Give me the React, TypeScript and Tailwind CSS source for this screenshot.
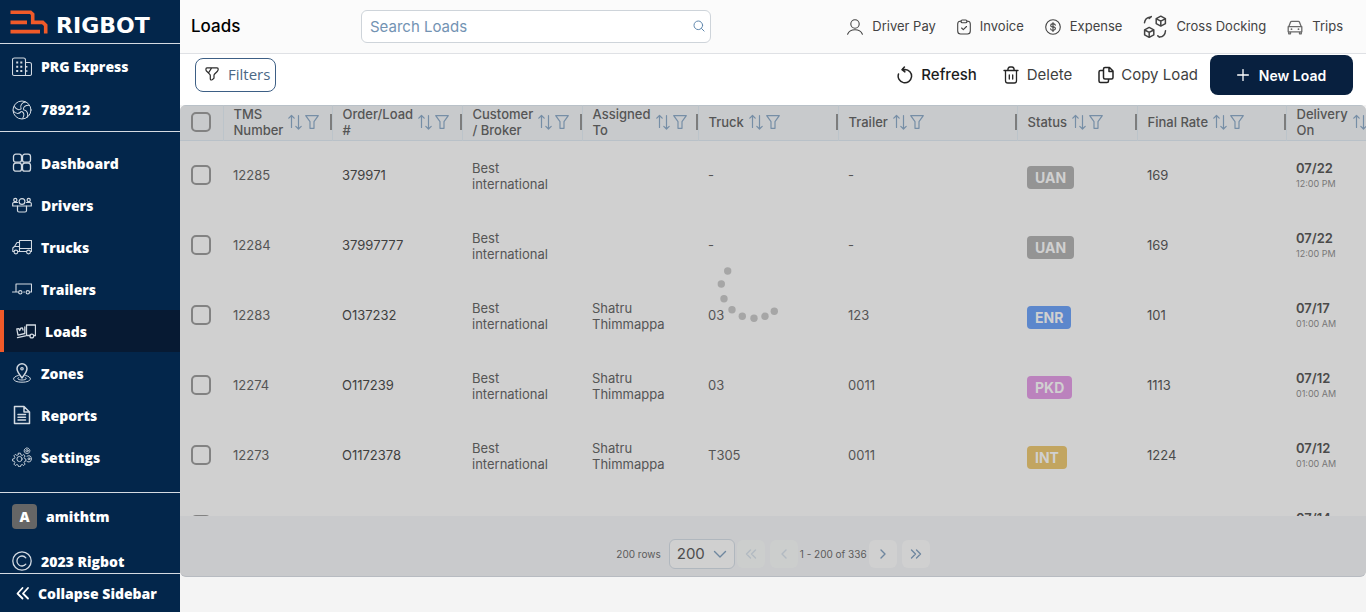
import React from "react";

type IconProps = { className?: string };

const line = {
  fill: "none",
  stroke: "currentColor",
  strokeLinecap: "round" as const,
  strokeLinejoin: "round" as const,
};

/* ---------- sidebar icons (20 x 20) ---------- */

function SideSvg({ children, width = 1.1 }: { children: React.ReactNode; width?: number }) {
  return (
    <svg viewBox="0 0 20 20" className="h-5 w-5 shrink-0 text-[#d3dae2]" {...line} strokeWidth={width} aria-hidden="true">
      {children}
    </svg>
  );
}

const CompanyIcon = () => (
  <SideSvg>
    <path d="M2.500 1h9q2 0 2 2v15.500h-11.500q-1.500 0-1.500-1.500V2.500Q.5 1 2.500 1zM13.500 5.500h4q2 0 2 2v9.500q0 1.500-1.500 1.500h-4.500" />
    <g strokeWidth="2" strokeLinecap="square">
      <path d="M5.200 5.500v0M9.300 5.500v0M5.200 9.700v0M9.300 9.700v0M5.200 13.900v0M9.300 13.900v0" />
      <path d="M14.700 9.800v0M14.700 14v0" strokeWidth="1.500" />
    </g>
  </SideSvg>
);
const DotIcon = () => (
  <SideSvg width={1}>
    <circle cx="10" cy="10" r="9" />
    {["rotate(15 10 10)", "rotate(135 10 10)", "rotate(255 10 10)"].map((turn) => (
      <g key={turn} transform={turn}>
        <path d="M8.800 9C6.500 6 8 2.600 11.500 1.300M11.200 9C10.500 6.300 12 4.500 15.300 3.600" />
      </g>
    ))}
  </SideSvg>
);
const DashboardIcon = () => (
  <SideSvg width={1.300}>
    <rect x="1.500" y="1.200" width="8" height="8" rx="2.300" />
    <rect x="10.500" y="1.200" width="8" height="8" rx="2.300" />
    <rect x="1.500" y="10.200" width="8" height="8" rx="2.300" />
    <rect x="10.500" y="10.200" width="8" height="8" rx="2.300" />
  </SideSvg>
);
const DriversIcon = () => (
  <SideSvg width={1.200}>
    <circle cx="10" cy="6.500" r="2.900" />
    <path d="M5.500 11h9v4.500q0 1.500-1.500 1.500H7q-1.500 0-1.500-1.500z" />
    <circle cx="3.300" cy="5" r="1.600" />
    <circle cx="16.700" cy="5" r="1.600" />
    <path d="M5.500 11H.7V8.500q0-1 1-1h3.800M14.500 11h4.800V8.500q0-1-1-1h-3.800" />
  </SideSvg>
);
const TrucksIcon = () => (
  <SideSvg>
    <path d="M7.500 14.500V3.500h12v11h-1M14.500 14.500h-9M7.500 5.500H5L2.500 9.500.8 11v3.500h1.200M2.500 9.500h5M7.500 11.500h12" />
    <circle cx="3.900" cy="15" r="1.900" />
    <circle cx="16.500" cy="15" r="1.900" />
  </SideSvg>
);
const TrailersIcon = () => (
  <SideSvg>
    <path d="M6 13H.5M4 13V5h15.500v8h-1.200M12.500 13h-.8" />
    <circle cx="8.300" cy="13.300" r="1.700" />
    <circle cx="15.800" cy="13.300" r="1.700" />
  </SideSvg>
);
const LoadsIcon = () => (
  <SideSvg width={1.300}>
    <path d="M10.500 14.500V4h9v10.500h-1M14 14.500h-3.500" />
    <circle cx="15.800" cy="15" r="1.900" />
    <path d="M8.800 12.500L2 14.200.8 8l2-.4.9 2 1.100-2.500 1.600-.3.600 2.200M8.800 12.500V6M1.500 16.700l8-1.900" />
  </SideSvg>
);
const ZonesIcon = () => (
  <SideSvg width={1.200}>
    <path d="M10 15C6.500 10.500 5 8 5 5.800a5 5 0 0 1 10 0C15 8 13.500 10.500 10 15z" strokeWidth="1.500" />
    <circle cx="10" cy="5.800" r="1.200" />
    <path d="M6.300 12.500c-7.500 1.700-6 6.700 3.700 6.700s11.200-5 3.700-6.700" strokeWidth="1" />
    <path d="M6.800 14.500c-2.300 1.200-.6 2.500 3.200 2.500s5.500-1.300 3.200-2.500" strokeWidth="1" />
  </SideSvg>
);
const ReportsIcon = () => (
  <SideSvg width={1.500}>
    <path d="M2.500 1.500h9.500l5.500 5.500v11.500h-15zM12 1.500V7h5.500" />
    <path d="M6 9.500h7.500M6 12.200h7.500M6 14.900h7.500" />
  </SideSvg>
);
const SettingsIcon = () => (
  <SideSvg width={0.900}>
    <circle cx="7.500" cy="12" r="2.600" />
    <path d="M6.500 6.200h2l.4 1.700 1.300.6 1.500-1 1.400 1.400-1 1.500.6 1.300 1.200.3v2l-1.200.3-.6 1.300 1 1.500-1.400 1.400-1.500-1-1.300.6-.4 1.600h-2l-.4-1.600-1.300-.6-1.500 1-1.400-1.400 1-1.500-.6-1.300-1.700-.3v-2l1.700-.4.6-1.300-1-1.500 1.400-1.400 1.500 1 1.300-.6z" />
    <circle cx="15" cy="3.800" r="1.200" />
    <circle cx="15" cy="3.800" r="2.800" strokeDasharray="1.500 .6" />
    <circle cx="17" cy="11.800" r="1" />
    <path d="M15 9.200q4-1.600 4.500 2.600-.5 4.200-4.500 2.700" strokeDasharray="1.600 .6" />
  </SideSvg>
);
const CopyrightIcon = () => (
  <SideSvg width={1.300}>
    <circle cx="10" cy="10" r="9.200" />
    <path d="M13.800 6.800a5 5 0 1 0 0 6.400" />
  </SideSvg>
);

/* ---------- header and toolbar icons ---------- */

const PersonIcon = () => (
  <svg viewBox="0 0 16 16" className="h-4 w-4" {...line} strokeWidth="1.100" aria-hidden="true">
    <circle cx="8" cy="5" r="4.200" />
    <path d="M.6 15.200C1.800 12.300 4.500 10.800 8 10.800s6.200 1.500 7.400 4.400" />
  </svg>
);
const InvoiceIcon = () => (
  <svg viewBox="0 0 14 16" className="h-4 w-[14px]" {...line} strokeWidth="1.100" aria-hidden="true">
    <path d="M4 2.200H3Q.7 2.300.7 5v7q0 3 2.800 3h7q2.800 0 2.800-3V5q0-2.700-2.300-2.800h-1" />
    <rect x="4" y="1" width="6" height="2.700" rx="1.300" />
    <path d="M4.600 9l1.700 1.700 3.200-3.200" />
  </svg>
);
const ExpenseIcon = () => (
  <svg viewBox="0 0 16 16" className="h-4 w-4" {...line} strokeWidth="1.100" aria-hidden="true">
    <circle cx="8" cy="8" r="7.300" />
    <path d="M10.300 6.200Q10 5 8.700 4.900H7.400Q5.700 5 5.700 6.400T7.400 7.900h1.200q1.800.2 1.800 1.700t-1.800 1.600H7.300Q5.900 11.100 5.600 9.900M8 3.500v9" />
  </svg>
);
const CrossDockIcon = () => (
  <svg viewBox="0 0 24 24" className="h-6 w-6" {...line} strokeWidth="1.500" aria-hidden="true">
    <path d="M17.800 1.200l4.600 2.400v5l-4.600 2.500-4.600-2.500v-5zM13.400 3.800l4.400 2.300 4.400-2.300M17.800 6.100v4.800" />
    <path d="M6.200 12.400l4.600 2.400v5l-4.600 2.500-4.600-2.500v-5zM1.800 15l4.400 2.300L10.600 15M6.200 17.300v4.800" />
    <path d="M1.500 7.800q.5-5.300 6-5.900M8.300 1.600L6.200 3.500M22.500 15.700q-.4 5.800-6 6.400M14.800 20.800l1.600 1.300" />
  </svg>
);
const TripsIcon = () => (
  <svg viewBox="0 0 16 16" className="h-4 w-4 text-[#6a6a6a]" {...line} strokeWidth="1.300" aria-hidden="true">
    <path d="M1.700 7.700L3.600 3q.3-.7 1-.7h6.800q.7 0 1 .7l1.900 4.700M1.200 7.700h13.600v5.100H1.200zM1.700 12.800v2h1.800v-2M12.500 12.800v2h1.800v-2" />
    <path d="M4.500 10.200v0M11.500 10.200v0" strokeWidth="1.800" />
  </svg>
);
const SearchIcon = () => (
  <svg viewBox="0 0 12 12" className="absolute top-[10px] right-[6px] h-3 w-3 text-[#5f87ad]" {...line} strokeWidth="1" aria-hidden="true">
    <circle cx="5.300" cy="5.300" r="4.300" />
    <path d="M8.500 8.500l2.600 2.600" />
  </svg>
);
const SlantedFilterIcon = () => (
  <svg viewBox="0 0 14 14" className="h-[14px] w-[14px] text-[#2b2b2b]" {...line} strokeWidth="1.200" aria-hidden="true">
    <path d="M2 .8h10q1.300.1 1.200 1.500-.1 1.300-1 2.200L9.400 7.200Q9 7.600 9 8.400v2.300q0 .7-.6 1.100l-1.300.9Q5.500 13.500 5.300 12V8.800q0-.9-.5-1.500L1.500 4Q.9 3.300.9 2.200.9.900 2 .8zM6.600 1L3.500 5.800" />
  </svg>
);
const RefreshIcon = () => (
  <svg viewBox="0 0 16 18" className="h-[18px] w-4 text-[#242424]" {...line} strokeWidth="1.500" aria-hidden="true">
    <path d="M1.500 8A6.700 6.700 0 1 0 8 3.400L5 3.700M5 3.700L7.400 1M5 3.700l2.900 2.200" />
  </svg>
);
const TrashIcon = () => (
  <svg viewBox="0 0 16 18" className="h-[18px] w-4 text-[#242424]" {...line} strokeWidth="1.300" aria-hidden="true">
    <path d="M1 4.500h14M2.500 4.500v10.200q0 2.300 2.300 2.300h6.400q2.300 0 2.300-2.300V4.500M4.800 4.500Q4.800 1 7 1h2q2.200 0 2.200 3.500M6.300 9v4M9.700 9v4" />
  </svg>
);
const CopyIcon = () => (
  <svg viewBox="0 0 16 18" className="h-[18px] w-4 text-[#242424]" {...line} strokeWidth="1.500" aria-hidden="true">
    <path d="M5.500 3q0-1.500 1.500-1.500h4.500L15 5v6.500q0 1.500-1.500 1.500H7q-1.500 0-1.500-1.500zM11 1.700V5.500h3.800M5.300 4.500H2.500Q1 4.500 1 6v9q0 1.500 1.500 1.500h6.500q1.500 0 1.500-1.500v-1.500" />
  </svg>
);
const PlusIcon = () => (
  <svg viewBox="0 0 12 12" className="h-3 w-3" {...line} strokeWidth="1.300" aria-hidden="true">
    <path d="M6 .6v10.800M.6 6h10.800" />
  </svg>
);

/* ---------- table icons ---------- */

const SortIcon = () => (
  <svg viewBox="0 0 14 16" className="h-4 w-[14px]" {...line} strokeWidth="1.200" aria-hidden="true">
    <path d="M3.500 13.500V1.500M.8 4.200l2.700-2.700 2.700 2.700M10.500 1.500V15M7.800 12.300l2.700 2.700 2.700-2.700" />
  </svg>
);
const FunnelIcon = () => (
  <svg viewBox="0 0 14 14" className="h-[14px] w-[14px]" {...line} strokeWidth="1.200" aria-hidden="true">
    <path d="M.7.7h12.600L9 6.700v6.600H5V6.700z" />
  </svg>
);
const Chevrons = ({ d, className = "" }: { d: string } & IconProps) => (
  <svg viewBox="0 0 14 14" className={`h-[14px] w-[14px] ${className}`} {...line} strokeWidth="1.400" aria-hidden="true">
    <path d={d} />
  </svg>
);

/* ---------- data ---------- */

const NAV = [
  { label: "Dashboard", icon: DashboardIcon },
  { label: "Drivers", icon: DriversIcon },
  { label: "Trucks", icon: TrucksIcon },
  { label: "Trailers", icon: TrailersIcon },
  { label: "Loads", icon: LoadsIcon, active: true },
  { label: "Zones", icon: ZonesIcon },
  { label: "Reports", icon: ReportsIcon },
  { label: "Settings", icon: SettingsIcon },
];

const COLUMNS = [
  { lines: ["TMS", "Number"], width: "w-[109px]" },
  { lines: ["Order/Load", "#"], width: "w-[130px]" },
  { lines: ["Customer", "/ Broker"], width: "w-[120px]" },
  { lines: ["Assigned", "To"], width: "w-[116px]" },
  { lines: ["Truck"], width: "w-[140px]" },
  { lines: ["Trailer"], width: "w-[179px]" },
  { lines: ["Status"], width: "w-[120px]" },
  { lines: ["Final Rate"], width: "w-[149px]" },
  { lines: ["Delivery", "On"], width: "w-[120px]" },
];

const STATUS: Record<string, string> = {
  UAN: "bg-[#949494]",
  ENR: "bg-[#5c87cc]",
  PKD: "bg-[#bb82bd]",
  INT: "bg-[#c2a560]",
};

const ROWS = [
  { id: "12285", order: "379971", driver: "", truck: "-", trailer: "-", status: "UAN", rate: "169", date: "07/22", time: "12:00 PM" },
  { id: "12284", order: "37997777", driver: "", truck: "-", trailer: "-", status: "UAN", rate: "169", date: "07/22", time: "12:00 PM" },
  { id: "12283", order: "O137232", driver: "Shatru Thimmappa", truck: "03", trailer: "123", status: "ENR", rate: "101", date: "07/17", time: "01:00 AM" },
  { id: "12274", order: "O117239", driver: "Shatru Thimmappa", truck: "03", trailer: "0011", status: "PKD", rate: "1113", date: "07/12", time: "01:00 AM" },
  { id: "12273", order: "O1172378", driver: "Shatru Thimmappa", truck: "T305", trailer: "0011", status: "INT", rate: "1224", date: "07/12", time: "01:00 AM" },
  { id: "", order: "", driver: "", truck: "", trailer: "", status: "", rate: "", date: "07/14", time: "" },
];

const DOTS = [
  [13.7, 27], [7.3, 40], [10, 54.7], [18, 65.7], [28.3, 72.3], [40, 74.3], [51, 72.3], [60.3, 67.3],
];

/* ---------- parts ---------- */

function Sidebar() {
  return (
    <aside className="flex w-[180px] shrink-0 flex-col bg-[#03264b] font-['Open_Sans',sans-serif] text-[14px] font-extrabold text-white">
      <div className="flex h-11 items-center gap-2 border-b border-[#d5dbe2] pl-2.5">
        <svg viewBox="0 0 38 24" className="h-6 w-[38px] shrink-0" fill="none" stroke="#f15a29" strokeWidth="3.600" aria-hidden="true">
          <path d="M.5 2.200h20l2.200 2v8.200h10l3 2.800v8.300" />
          <path d="M.5 12.400h16.500M.5 21.600h29.500" />
        </svg>
        <span className="pt-2 font-['DejaVu_Sans',sans-serif] text-[22px] leading-6 font-bold">RIGBOT</span>
      </div>
      <div className="border-b border-[#d5dbe2] pt-px">
        <div className="flex h-[43px] items-center gap-[9px] px-3"><CompanyIcon />PRG Express</div>
        <div className="flex h-[43px] items-center gap-[9px] px-3"><DotIcon />789212</div>
      </div>
      <nav className="pt-2.5">
        {NAV.map(({ label, icon: Icon, active }) => (
          <a
            key={label}
            href="#"
            aria-current={active ? "page" : undefined}
            className={`flex h-[42px] items-center gap-[9px] px-3 ${active ? "border-l-4 border-[#f15a29] bg-[#071a33]" : ""}`}
          >
            <Icon />
            {label}
          </a>
        ))}
      </nav>
      <div className="mt-auto border-t border-[#d5dbe2]">
        <div className="flex h-[46px] items-center gap-[9px] px-3">
          <span className="flex h-[25px] w-[25px] items-center justify-center rounded bg-[#666]">A</span>
          amithtm
        </div>
        <div className="flex h-[34px] items-center gap-[9px] px-3 pt-[10px]"><CopyrightIcon />2023 Rigbot</div>
      </div>
      <button type="button" className="flex h-[39px] items-center gap-2 border-t border-[#d5dbe2] pl-4">
        <svg viewBox="0 0 14 14" className="h-[14px] w-[14px]" {...line} strokeWidth="1.800" aria-hidden="true">
          <path d="M6.500 2L1.500 7.500l5 5M12 2L7 7.500l5 5" />
        </svg>
        Collapse Sidebar
      </button>
    </aside>
  );
}

function HeaderLink({ icon, label }: { icon: React.ReactNode; label: string }) {
  return (
    <a href="#" className="flex items-center gap-[9px] whitespace-nowrap">
      {icon}
      {label}
    </a>
  );
}

function TopBar() {
  return (
    <header className="flex h-[54px] shrink-0 items-center border-b border-[#dfe1e5] bg-[#fbfbfb] pr-[23px] pl-[11px]">
      <h1 className="w-[170px] text-[17px] font-medium text-black">Loads</h1>
      <label className="relative block h-[33px] w-[350px]">
        <input
          type="text"
          aria-label="Search Loads"
          placeholder="Search Loads"
          className="h-full w-full rounded-md border border-[#ced4da] bg-white pr-7 pl-2 text-[15px] placeholder:text-[#7393b3]"
        />
        <SearchIcon />
      </label>
      <nav className="ml-auto flex items-center gap-[21px] text-[13px] text-[#434343]">
        <HeaderLink icon={<PersonIcon />} label="Driver Pay" />
        <HeaderLink icon={<InvoiceIcon />} label="Invoice" />
        <HeaderLink icon={<ExpenseIcon />} label="Expense" />
        <HeaderLink icon={<CrossDockIcon />} label="Cross Docking" />
        <HeaderLink icon={<TripsIcon />} label="Trips" />
      </nav>
    </header>
  );
}

function Toolbar() {
  return (
    <div className="flex h-[51px] shrink-0 items-center bg-white pr-[13px] pb-[9px] pl-[15px] text-[15px]">
      <button type="button" className="flex h-[34px] items-center gap-[9px] rounded-lg border border-[#3d5f85] pr-[5px] pb-0.5 pl-[9px] font-['Open_Sans',sans-serif] text-[#4b6885]">
        <SlantedFilterIcon />
        Filters
      </button>
      <div className="ml-auto flex items-center">
        <button type="button" className="mr-[26px] flex items-center gap-2 font-medium text-[#1c1c1c]"><RefreshIcon />Refresh</button>
        <button type="button" className="mr-[26px] flex items-center gap-2 text-[#3f3f3f]"><TrashIcon />Delete</button>
        <button type="button" className="mr-3 flex items-center gap-[7px] text-[#3f3f3f]"><CopyIcon />Copy Load</button>
        <button type="button" className="flex h-10 w-[143px] items-center justify-center gap-2.5 rounded-lg bg-[#08203f] text-[14px] font-semibold text-white">
          <PlusIcon />
          New Load
        </button>
      </div>
    </div>
  );
}

function Check({ label }: { label: string }) {
  return (
    <input type="checkbox" aria-label={label} className="block h-5 w-5 appearance-none rounded-[5px] border-2 border-[#828282]" />
  );
}

function LoadsTable() {
  return (
    <div className="h-[calc(100vh-201px)] overflow-hidden">
      <table className="w-[1226px] table-fixed border-collapse text-left text-[13px] leading-4 text-[#555]">
        <thead>
          <tr className="h-[35px] border-t border-b border-[#b9c1c8] bg-[#c8cacc]">
            <th scope="col" className="w-[43px] p-0 pb-0.5 pl-[11px]"><Check label="Select all loads" /></th>
            {COLUMNS.map(({ lines, width }) => (
              <th key={lines[0]} scope="col" className={`border-l border-[#bcc4ca] p-0 pl-[10px] font-medium ${width}`}>
                <div className="flex h-[34px] items-center pb-0.5">
                  <span className="whitespace-pre-line">{lines.join("\n")}</span>
                  <span className="ml-[5px] flex items-center gap-[3px] text-[#768ea6]">
                    <SortIcon />
                    <FunnelIcon />
                  </span>
                  <span className="ml-auto h-4 w-0.5 bg-[#7d7d7d]" />
                </div>
              </th>
            ))}
          </tr>
        </thead>
        <tbody>
          {ROWS.map((row, i) => (
            <tr key={i} className="h-[70px]">
              <td className="p-0 pb-0.5 pl-[11px]"><Check label={`Select load ${row.id}`} /></td>
              <td className="p-0 pb-0.5 pl-[10px]">{row.id}</td>
              <td className="p-0 pb-0.5 pl-[10px] text-[#3f3f3f]">{row.order}</td>
              <td className="p-0 pr-5 pl-[10px]">{row.id && "Best international"}</td>
              <td className="p-0 pr-5 pl-[10px]">{row.driver}</td>
              <td className="p-0 pb-0.5 pl-[10px]">{row.truck}</td>
              <td className="p-0 pb-0.5 pl-[10px]">{row.trailer}</td>
              <td className="p-0 pt-1 pl-[10px]">
                {row.status && (
                  <span className={`inline-block rounded px-2 text-[14px] leading-[23px] font-bold text-[#d0d0d0] ${STATUS[row.status]}`}>
                    {row.status}
                  </span>
                )}
              </td>
              <td className="p-0 pb-0.5 pl-[10px] text-[#4a4a4a]">{row.rate}</td>
              <td className="p-0 pl-[10px]">
                <div className="font-semibold text-[#4a4a4a]">{row.date}</div>
                <div className="h-4 text-[9px] text-[#777]">{row.time}</div>
              </td>
            </tr>
          ))}
        </tbody>
      </table>
    </div>
  );
}

function Pager() {
  const button = "flex h-7 w-7 items-center justify-center rounded-md";
  return (
    <div className="flex h-[61px] items-center justify-center rounded-b-md border-b border-[#b7bbc1] bg-[#c9cacc] pt-4 text-[10px] text-[#5b5b5b]">
      <label htmlFor="page-size" className="mr-2">200 rows</label>
      <div className="relative mr-0.5">
        <select id="page-size" defaultValue="200" className="h-[30px] w-[66px] appearance-none rounded-md border border-[#b0b7be] bg-[#d0d0d0] pl-[7px] text-[15px] text-[#4d4d4d]">
          <option>200</option>
        </select>
        <Chevrons d="M1.500 4.500L7 10l5.500-5.500" className="pointer-events-none absolute top-2 right-2 text-[#6f879f]" />
      </div>
      <button type="button" aria-label="First page" disabled className={`${button} mr-[5px] bg-[#cccecd] text-[#b2bac2]`}><Chevrons d="M6.500 3L2.500 7l4 4M11.500 3l-4 4 4 4" /></button>
      <button type="button" aria-label="Previous page" disabled className={`${button} mr-0.5 bg-[#cccecd] text-[#b2bac2]`}><Chevrons d="M9 3L5 7l4 4" /></button>
      <span className="whitespace-nowrap">1 - 200 of 336</span>
      <button type="button" aria-label="Next page" className={`${button} mr-[5px] ml-0.5 bg-[#d0d0d0] text-[#6f879f]`}><Chevrons d="M5 3l4 4-4 4" /></button>
      <button type="button" aria-label="Last page" className={`${button} bg-[#d0d0d0] text-[#6f879f]`}><Chevrons d="M2.500 3l4 4-4 4M7.500 3l4 4-4 4" /></button>
    </div>
  );
}

export default function App() {
  return (
    <div className="flex h-screen overflow-hidden bg-[#f4f4f4] font-['Inter',sans-serif]">
      <Sidebar />
      <main className="flex min-w-0 flex-1 flex-col">
        <TopBar />
        <Toolbar />
        <section className="relative overflow-hidden rounded-md bg-[#d0d0d0]" aria-busy="true">
          <LoadsTable />
          <Pager />
          <svg viewBox="0 0 80 80" className="absolute top-[139px] left-[534px] h-20 w-20" fill="#a6a6a6" aria-hidden="true">
            {DOTS.map(([x, y]) => (
              <circle key={x} cx={x} cy={y} r="3.700" />
            ))}
          </svg>
        </section>
      </main>
    </div>
  );
}
